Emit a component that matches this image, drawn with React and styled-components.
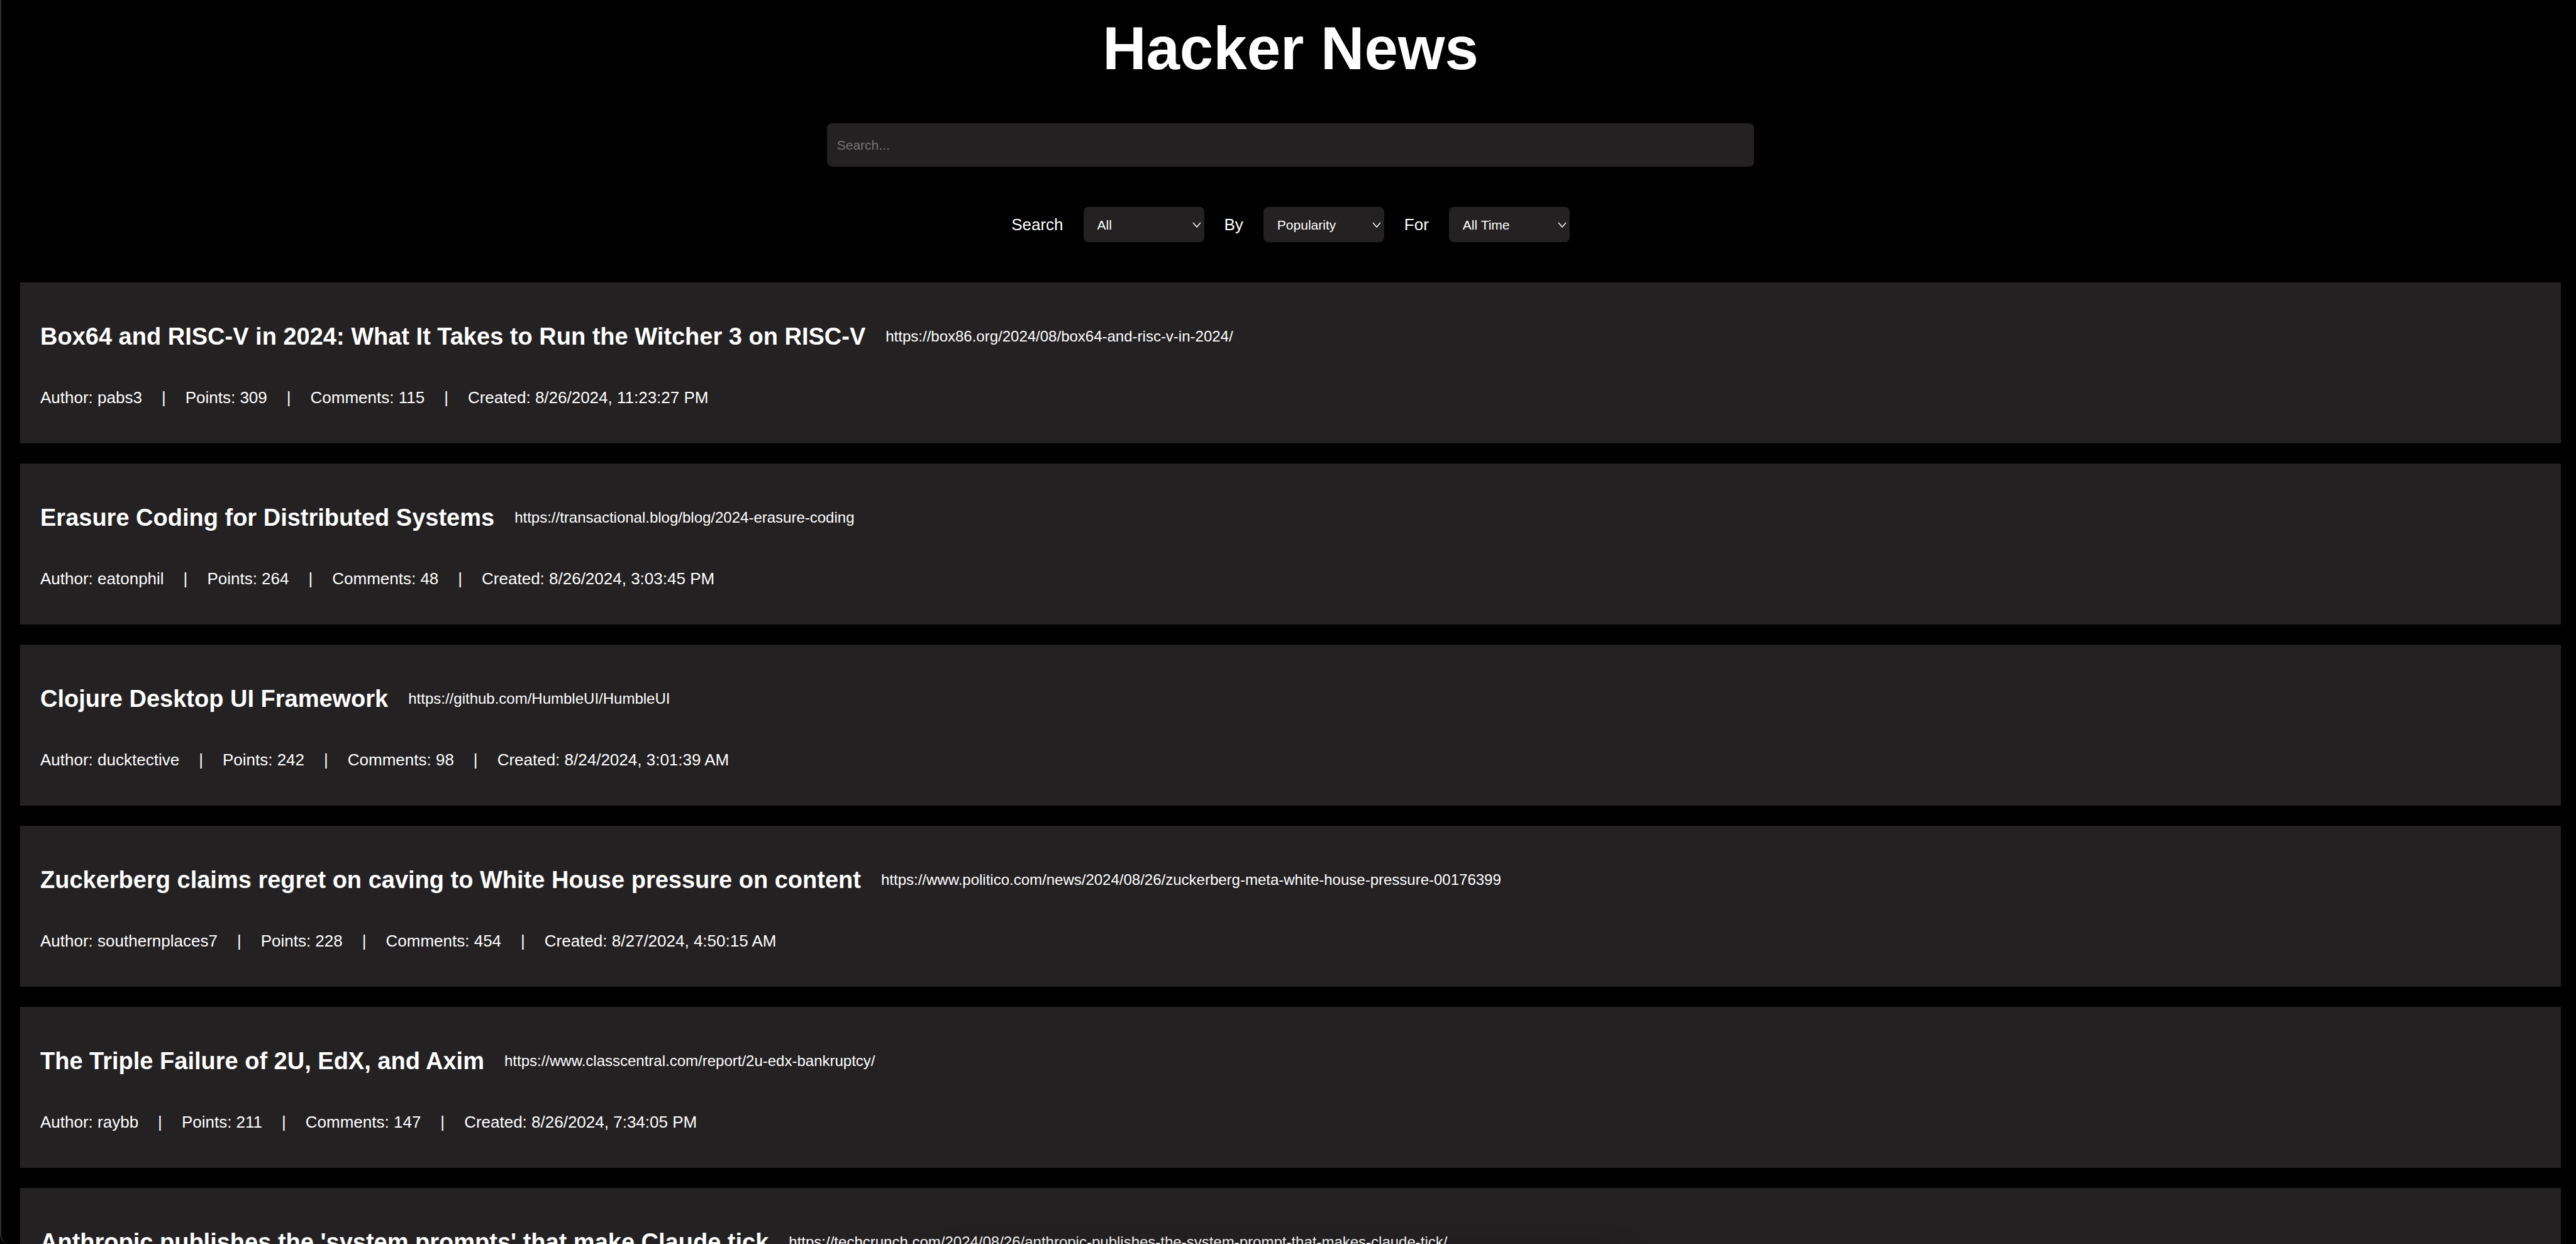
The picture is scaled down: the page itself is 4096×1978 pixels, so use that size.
import React from "react";
import styled, { createGlobalStyle } from "styled-components";

const GlobalStyle = createGlobalStyle`
  *, *::before, *::after { box-sizing: border-box; }
  html { background: #000; }
  body {
    margin: 0;
    background: #000;
    color: #fff;
    font-family: "Liberation Sans", Arial, Helvetica, sans-serif;
    font-size: 26px;
    line-height: 30px;
  }
`;

const Page = styled.div`
  display: flex;
  flex-direction: column;
  gap: 64px;
  height: 100vh;
  overflow: hidden;
  padding: 22px 24px 0 30px;
  border-left: 2px solid #2b2b2b;
  border-bottom-left-radius: 16px;
`;

const Title = styled.h1`
  margin: 0;
  font-size: 96px;
  line-height: 110px;
  font-weight: 700;
  text-align: center;
`;

const SearchForm = styled.form`
  display: flex;
  flex-direction: column;
  align-items: center;
  gap: 64px;
`;

const SearchInput = styled.input`
  width: 36vw;
  height: 69px;
  padding: 0 16px;
  border: 0;
  border-radius: 8px;
  background: #232122;
  color: #fff;
  font-family: inherit;
  font-size: 21px;
  &::placeholder { color: #757575; opacity: 1; }
`;

const Filters = styled.div`
  display: flex;
  align-items: center;
  gap: 32px;
`;

const SelectBox = styled.div`
  position: relative;
  width: 192px;
  height: 56px;
`;

const Select = styled.select`
  appearance: none;
  width: 100%;
  height: 100%;
  padding: 0 22px;
  border: 0;
  border-radius: 8px;
  background: #232122;
  color: #fff;
  font-family: inherit;
  font-size: 21px;
`;

const Chevron = styled.svg`
  position: absolute;
  top: 24px;
  right: 5px;
  width: 14px;
  height: 9px;
  fill: none;
  stroke: #fff;
  stroke-width: 1.5;
  pointer-events: none;
`;

const Stories = styled.main`
  display: flex;
  flex-direction: column;
  gap: 32px;
`;

const Card = styled.article`
  display: flex;
  flex-direction: column;
  flex-shrink: 0;
  gap: 60px;
  padding: 64px 32px 58px;
  background: #232122;
`;

const Row = styled.div`
  display: flex;
  align-items: center;
  gap: ${(p) => p.$gap}px;
`;

const Headline = styled.h2`
  margin: 0;
  font-size: 38px;
  line-height: 44px;
  font-weight: 700;
`;

const StoryLink = styled.a`
  color: #fff;
  font-size: 24px;
  text-decoration: none;
`;

const BottomShade = styled.div`
  position: fixed;
  top: 100%;
  left: 50%;
  width: 28vw;
  height: 60px;
  margin-left: -14vw;
  border-radius: 30px;
  box-shadow: 0 0 80px rgba(0, 0, 0, 0.16);
  pointer-events: none;
`;

const filters = [
  { id: "tags", label: "Search", options: ["All", "Story", "Comment"] },
  { id: "sort", label: "By", options: ["Popularity", "Date"] },
  { id: "range", label: "For", options: ["All Time", "Last 24h", "Past Week", "Past Month", "Past Year"] },
];

const stories = [
  { title: "Box64 and RISC-V in 2024: What It Takes to Run the Witcher 3 on RISC-V", url: "https://box86.org/2024/08/box64-and-risc-v-in-2024/", author: "pabs3", points: 309, comments: 115, created: "8/26/2024, 11:23:27 PM" },
  { title: "Erasure Coding for Distributed Systems", url: "https://transactional.blog/blog/2024-erasure-coding", author: "eatonphil", points: 264, comments: 48, created: "8/26/2024, 3:03:45 PM" },
  { title: "Clojure Desktop UI Framework", url: "https://github.com/HumbleUI/HumbleUI", author: "ducktective", points: 242, comments: 98, created: "8/24/2024, 3:01:39 AM" },
  { title: "Zuckerberg claims regret on caving to White House pressure on content", url: "https://www.politico.com/news/2024/08/26/zuckerberg-meta-white-house-pressure-00176399", author: "southernplaces7", points: 228, comments: 454, created: "8/27/2024, 4:50:15 AM" },
  { title: "The Triple Failure of 2U, EdX, and Axim", url: "https://www.classcentral.com/report/2u-edx-bankruptcy/", author: "raybb", points: 211, comments: 147, created: "8/26/2024, 7:34:05 PM" },
  { title: "Anthropic publishes the 'system prompts' that make Claude tick", url: "https://techcrunch.com/2024/08/26/anthropic-publishes-the-system-prompt-that-makes-claude-tick/" },
];

function Filter({ id, label, options }) {
  return (
    <>
      <label htmlFor={id}>{label}</label>
      <SelectBox>
        <Select id={id} defaultValue={options[0]}>
          {options.map((o) => <option key={o}>{o}</option>)}
        </Select>
        <Chevron viewBox="0 0 14 9" aria-hidden="true">
          <path d="M1 1L7 8L13 1" />
        </Chevron>
      </SelectBox>
    </>
  );
}

function Story({ story }) {
  return (
    <Card>
      <Row $gap={32}>
        <Headline>{story.title}</Headline>
        <StoryLink href={story.url}>{story.url}</StoryLink>
      </Row>
      {story.author && (
        <Row $gap={31}>
          <span>Author: {story.author}</span>
          <span>|</span>
          <span>Points: {story.points}</span>
          <span>|</span>
          <span>Comments: {story.comments}</span>
          <span>|</span>
          <span>Created: {story.created}</span>
        </Row>
      )}
    </Card>
  );
}

export default function App() {
  return (
    <>
      <GlobalStyle />
      <Page>
        <Title>Hacker News</Title>
        <SearchForm onSubmit={(e) => e.preventDefault()}>
          <SearchInput type="text" placeholder="Search..." aria-label="Search stories" />
          <Filters>
            {filters.map((f) => <Filter key={f.id} {...f} />)}
          </Filters>
        </SearchForm>
        <Stories>
          {stories.map((s) => <Story key={s.title} story={s} />)}
        </Stories>
      </Page>
      <BottomShade />
    </>
  );
}
